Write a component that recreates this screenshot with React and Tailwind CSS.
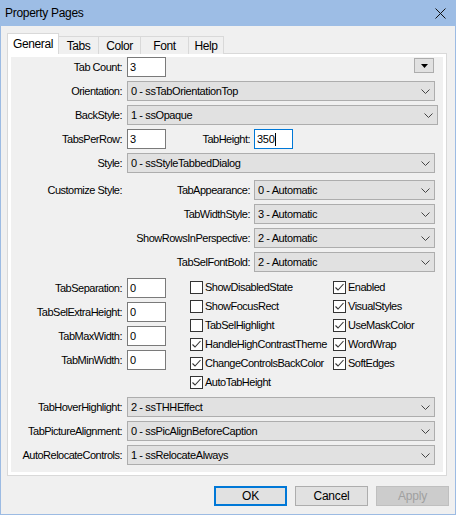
import React from "react";

const font = { fontFamily: '"Liberation Sans", Arial, sans-serif' };

function Chevron() {
  return (
    <svg width="9" height="5" viewBox="0 0 9 5" className="shrink-0">
      <polyline points="0.5,0.5 4.5,4.5 8.5,0.5" fill="none" stroke="#444" strokeWidth="1" />
    </svg>
  );
}

function Select({ value, w }) {
  return (
    <div className={`${w} h-[20px] bg-[#e1e1e1] border border-[#adadad] flex items-center justify-between pl-[3px] pr-[4px]`}>
      <span className="text-[11px] tracking-[-0.4px] text-black leading-none whitespace-nowrap">{value}</span>
      <Chevron />
    </div>
  );
}

function Field({ value, focus }) {
  return (
    <div className={`w-[39px] h-[20px] bg-white border flex items-center pl-[2px] ${focus ? "border-[#0078d7]" : "border-[#7a7a7a]"}`}>
      <span className="text-[11px] tracking-[-0.3px] text-black leading-none">{value}</span>
      {focus && <span className="w-px h-[13px] bg-black ml-px" />}
    </div>
  );
}

function Label({ children, w = "w-[111px]" }) {
  return (
    <div className={`${w} shrink-0 text-right text-[11px] tracking-[-0.5px] text-black leading-none whitespace-nowrap`}>
      {children}
    </div>
  );
}

function Check({ label, checked }) {
  return (
    <div className="h-[19px] flex items-center">
      <div className="w-[13px] h-[13px] bg-white border border-[#333] flex items-center justify-center">
        {checked && (
          <svg width="11" height="11" viewBox="0 0 11 11">
            <path d="M1.5 5.5 L4 8 L9.5 2" fill="none" stroke="#333" strokeWidth="1.1" />
          </svg>
        )}
      </div>
      <span className="ml-[2px] text-[11px] tracking-[-0.5px] text-black leading-none whitespace-nowrap">{label}</span>
    </div>
  );
}

function Btn({ children, primary, disabled }) {
  return (
    <div
      className={`w-[73px] h-[20px] flex items-center justify-center text-[12px] tracking-[-0.2px] leading-none ${
        disabled
          ? "bg-[#cccccc] border border-[#bfbfbf] text-[#a0a0a0]"
          : primary
          ? "bg-[#e1e1e1] border-2 border-[#0078d7] text-black"
          : "bg-[#e1e1e1] border border-[#adadad] text-black"
      }`}
    >
      {children}
    </div>
  );
}

export default function App() {
  const tabs = [
    { name: "Tabs", w: "w-[40px]" },
    { name: "Color", w: "w-[42px]" },
    { name: "Font", w: "w-[48px]" },
    { name: "Help", w: "w-[35px]" },
  ];

  return (
    <div style={font} className="w-[456px] h-[515px] bg-[#f0f0f0] border-x border-b border-[#9cbbe3] flex flex-col select-none">
      {/* title bar */}
      <div className="h-[26px] -mx-px bg-[#9dbde5] flex items-center justify-between pl-[5px] pr-[10px] shrink-0">
        <span className="text-[12px] tracking-[-0.3px] text-black">Property Pages</span>
        <svg width="11" height="11" viewBox="0 0 11 11">
          <path d="M0.5 0.5 L10.5 10.5 M10.5 0.5 L0.5 10.5" stroke="#111" strokeWidth="1" />
        </svg>
      </div>

      <div className="pl-[6px] pt-[7px]">
        {/* tabs */}
        <div className="flex items-end h-[21px] relative z-10 -mb-px">
          <div className="w-[52px] h-[21px] bg-white border-x border-t border-[#d9d9d9] flex items-center justify-center text-[12px] tracking-[-0.4px] text-black">
            General
          </div>
          {tabs.map((t) => (
            <div
              key={t.name}
              className={`${t.w} h-[18px] bg-[#f0f0f0] border-r border-t border-[#d9d9d9] flex items-center justify-center text-[12px] tracking-[-0.4px] text-black`}
            >
              {t.name}
            </div>
          ))}
        </div>

        {/* panel */}
        <div className="w-[440px] h-[423px] bg-white border border-[#d9d9d9] p-[3px]">
          <div className="h-full bg-[#f0f0f0]">
            <div className="flex flex-col gap-[4px]">
              <div className="h-[20px] flex items-start">
                <div className="h-[20px] flex items-center">
                  <Label>Tab Count:</Label>
                </div>
                <div className="ml-[5px]">
                  <Field value="3" />
                </div>
                <div className="ml-auto mr-[9px] mt-[1px] w-[20px] h-[15px] bg-[#e1e1e1] border border-[#adadad] flex items-center justify-center">
                  <svg width="7" height="4" viewBox="0 0 7 4">
                    <polygon points="0,0 7,0 3.5,4" fill="#000" />
                  </svg>
                </div>
              </div>
              <div className="h-[20px] flex items-center">
                <Label>Orientation:</Label>
                <div className="ml-[5px]">
                  <Select value="0 - ssTabOrientationTop" w="w-[308px]" />
                </div>
              </div>
              <div className="h-[20px] flex items-center">
                <Label>BackStyle:</Label>
                <div className="ml-[5px]">
                  <Select value="1 - ssOpaque" w="w-[311px]" />
                </div>
              </div>
              <div className="h-[20px] flex items-center">
                <Label>TabsPerRow:</Label>
                <div className="ml-[5px]">
                  <Field value="3" />
                </div>
                <Label w="w-[84px]">TabHeight:</Label>
                <div className="ml-[4px]">
                  <Field value="350" focus />
                </div>
              </div>
              <div className="h-[20px] flex items-center">
                <Label>Style:</Label>
                <div className="ml-[5px]">
                  <Select value="0 - ssStyleTabbedDialog" w="w-[308px]" />
                </div>
              </div>
            </div>

            {/* customize */}
            <div className="mt-[7px] flex flex-col gap-[4px]">
              {[
                ["Customize Style:", "TabAppearance:", "0 - Automatic"],
                ["", "TabWidthStyle:", "3 - Automatic"],
                ["", "ShowRowsInPerspective:", "2 - Automatic"],
                ["", "TabSelFontBold:", "2 - Automatic"],
              ].map(([a, b, v]) => (
                <div key={b} className="h-[20px] flex items-center">
                  <Label>{a}</Label>
                  <Label w="w-[128px]">{b}</Label>
                  <div className="ml-[4px]">
                    <Select value={v} w="w-[181px]" />
                  </div>
                </div>
              ))}
            </div>

            {/* fields + checkboxes */}
            <div className="mt-[6px] flex items-start">
              <div className="flex flex-col gap-[4px]">
                {["TabSeparation:", "TabSelExtraHeight:", "TabMaxWidth:", "TabMinWidth:"].map((l) => (
                  <div key={l} className="h-[20px] flex items-center">
                    <Label>{l}</Label>
                    <div className="ml-[5px]">
                      <Field value="0" />
                    </div>
                  </div>
                ))}
              </div>
              <div className="ml-[24px] w-[143px] flex flex-col">
                <Check label="ShowDisabledState" />
                <Check label="ShowFocusRect" />
                <Check label="TabSelHighlight" />
                <Check label="HandleHighContrastTheme" checked />
                <Check label="ChangeControlsBackColor" checked />
                <Check label="AutoTabHeight" checked />
              </div>
              <div className="flex flex-col">
                <Check label="Enabled" checked />
                <Check label="VisualStyles" checked />
                <Check label="UseMaskColor" checked />
                <Check label="WordWrap" checked />
                <Check label="SoftEdges" checked />
              </div>
            </div>

            {/* bottom selects */}
            <div className="mt-[5px] flex flex-col gap-[4px]">
              {[
                ["TabHoverHighlight:", "2 - ssTHHEffect"],
                ["TabPictureAlignment:", "0 - ssPicAlignBeforeCaption"],
                ["AutoRelocateControls:", "1 - ssRelocateAlways"],
              ].map(([l, v]) => (
                <div key={l} className="h-[20px] flex items-center">
                  <Label>{l}</Label>
                  <div className="ml-[5px]">
                    <Select value={v} w="w-[308px]" />
                  </div>
                </div>
              ))}
            </div>
          </div>
        </div>
      </div>

      {/* buttons */}
      <div className="mt-[10px] flex justify-end gap-[8px] pr-[6px]">
        <Btn primary>OK</Btn>
        <Btn>Cancel</Btn>
        <Btn disabled>Apply</Btn>
      </div>
    </div>
  );
}
